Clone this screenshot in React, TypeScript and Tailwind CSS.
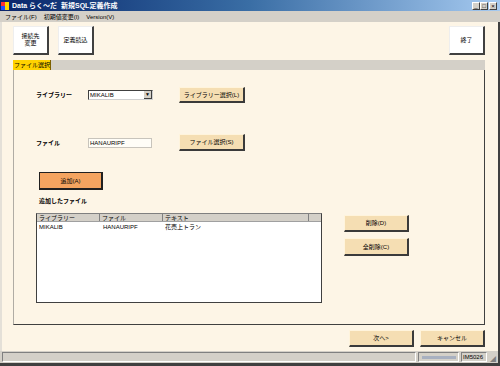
import React from "react";

const font = { fontFamily: '"Liberation Sans", "Noto Sans CJK JP", sans-serif' };

function WinBtn({ children }: { children: React.ReactNode }) {
  return (
    <div className="w-[8px] h-[8px] bg-[#d4d0c8] border-t border-l border-white border-r border-b border-r-[#404040] border-b-[#404040] flex items-center justify-center text-[6px] leading-none text-black">
      {children}
    </div>
  );
}

function WheatBtn({ label, w, h }: { label: string; w: number; h: number }) {
  return (
    <div
      className="bg-[#f5deb3] border-t border-l border-t-[#fff4dc] border-l-[#fff4dc] border-r-2 border-b-2 border-r-[#3a3a3a] border-b-[#3a3a3a] flex items-center justify-center text-[6px] leading-none text-black whitespace-nowrap"
      style={{ width: w, height: h }}
    >
      {label}
    </div>
  );
}

function ToolBtn({ label }: { label: React.ReactNode }) {
  return (
    <div className="w-[36px] h-[29px] bg-white border-t border-l border-t-[#eeeeee] border-l-[#eeeeee] border-r-2 border-b-2 border-r-[#404040] border-b-[#404040] flex items-center justify-center text-center text-[6px] leading-[7px] text-black whitespace-nowrap">
      {label}
    </div>
  );
}

export default function App() {
  return (
    <div className="w-[500px] h-[366px] flex flex-col bg-[#fdf5e6] overflow-hidden" style={font}>
      {/* Title bar */}
      <div className="h-[11px] flex items-center bg-gradient-to-r from-[#0a246a] via-[#3a6ea5] to-[#a6caf0] pl-[1px] pr-[3px]">
        <div className="w-[8px] h-[8px] mr-[3px] flex flex-wrap">
          <div className="w-[4px] h-[4px] bg-[#ff3030]" />
          <div className="w-[4px] h-[4px] bg-[#ffd800]" />
          <div className="w-[4px] h-[4px] bg-[#2050ff]" />
          <div className="w-[4px] h-[4px] bg-[#ffd800]" />
        </div>
        <div className="text-white font-bold text-[7px] leading-none whitespace-nowrap">Data らく～だ&nbsp;&nbsp;新規SQL定義作成</div>
        <div className="flex-1" />
        <div className="flex items-center">
          <WinBtn>_</WinBtn>
          <WinBtn>□</WinBtn>
          <div className="ml-[1px]"><WinBtn>×</WinBtn></div>
        </div>
      </div>
      {/* Menu bar */}
      <div className="h-[11px] bg-[#d4d0c8] flex items-center pl-[3px] gap-[7px] text-[6px] leading-none text-black border-l-2 border-l-[#d4d0c8] whitespace-nowrap">
        <span>ファイル(F)</span>
        <span>初期値変更(I)</span>
        <span>Version(V)</span>
      </div>
      {/* Content */}
      <div className="flex-1 flex flex-col border-l-2 border-l-[#e4e0d8] border-r-2 border-r-[#404040] pl-[11px] pr-[13px]">
        {/* Toolbar */}
        <div className="h-[29px] mt-[4px] flex">
          <ToolBtn label={<>接続先<br />変更</>} />
          <div className="ml-[9px]"><ToolBtn label="定義読込" /></div>
          <div className="flex-1" />
          <ToolBtn label="終了" />
        </div>
        {/* Tab strip */}
        <div className="h-[10px] mt-[5px] bg-[#d4d0c8] flex">
          <div className="w-[38px] bg-[#ffd200] border-r border-r-[#806000] text-[6px] leading-[10px] text-black pl-[1px] whitespace-nowrap">ファイル選択</div>
        </div>
        {/* Panel */}
        <div className="h-[255px] border-l border-l-[#b0aca4] border-r border-r-[#404040] border-b border-b-[#404040] pl-[22px] pt-[17px] flex flex-col">
          {/* Library row */}
          <div className="flex items-center h-[16px]">
            <div className="w-[52px] text-[6px] font-bold leading-none whitespace-nowrap">ライブラリー</div>
            <div className="w-[65px] h-[10px] bg-white border-t border-l border-t-[#404040] border-l-[#404040] border-r border-b border-r-[#d0d0d0] border-b-[#d0d0d0] flex items-center">
              <span className="flex-1 text-[6px] leading-none pl-[1px]">MIKALIB</span>
              <div className="w-[8px] h-[8px] bg-[#d4d0c8] border-r border-b border-r-[#404040] border-b-[#404040] flex items-center justify-center text-[5px] leading-none">▼</div>
            </div>
            <div className="ml-[26px]"><WheatBtn label="ライブラリー選択(L)" w={66} h={16} /></div>
          </div>
          {/* File row */}
          <div className="flex items-center h-[17px] mt-[31px]">
            <div className="w-[52px] text-[6px] font-bold leading-none whitespace-nowrap">ファイル</div>
            <div className="w-[64px] h-[10px] bg-[#fffdf7] border border-[#c8c4bc] flex items-center text-[6px] leading-none pl-[1px]">HANAURIPF</div>
            <div className="ml-[27px]"><WheatBtn label="ファイル選択(S)" w={66} h={17} /></div>
          </div>
          {/* Add button */}
          <div className="mt-[21px] ml-[3px] w-[64px] h-[18px] bg-[#f4a460] border border-[#202020] border-r-2 border-b-2 flex items-center justify-center text-[6px] leading-none">追加(A)</div>
          <div className="mt-[8px] ml-[3px] text-[6px] font-bold leading-none whitespace-nowrap">追加したファイル</div>
          <div className="flex mt-[9px]">
            {/* List */}
            <div className="w-[286px] h-[90px] bg-white border border-[#404040] border-t-[#808080] flex flex-col">
              <div className="h-[8px] bg-[#d4d0c8] flex text-[6px] leading-[8px] border-b border-b-[#a0a0a0] whitespace-nowrap">
                <div className="w-[63px] pl-[2px] border-r border-r-[#808080]">ライブラリー</div>
                <div className="w-[63px] pl-[2px] border-r border-r-[#808080]">ファイル</div>
                <div className="w-[146px] pl-[2px] border-r border-r-[#808080]">テキスト</div>
                <div className="flex-1" />
              </div>
              <div className="flex text-[6px] leading-[9px] mt-[1px] whitespace-nowrap">
                <div className="w-[63px] pl-[2px]">MIKALIB</div>
                <div className="w-[63px] pl-[3px]">HANAURIPF</div>
                <div className="w-[146px] pl-[2px]">花売上トラン</div>
              </div>
            </div>
            <div className="ml-[22px] flex flex-col gap-[6px] mt-[2px]">
              <WheatBtn label="削除(D)" w={65} h={17} />
              <WheatBtn label="全削除(C)" w={65} h={18} />
            </div>
          </div>
        </div>
        {/* Bottom buttons */}
        <div className="h-[17px] mt-[5px] flex justify-end gap-[6px]">
          <WheatBtn label="次へ>" w={65} h={17} />
          <WheatBtn label="キャンセル" w={65} h={17} />
        </div>
        <div className="flex-1" />
      </div>
      {/* Status bar */}
      <div className="h-[12px] bg-[#d4d0c8] flex items-center gap-[2px] px-[2px] border-r-2 border-r-[#404040]">
        <div className="flex-1 h-[10px] border-t border-l border-t-[#808080] border-l-[#808080] border-r border-b border-r-white border-b-white" />
        <div className="w-[41px] h-[10px] border-t border-l border-t-[#808080] border-l-[#808080] border-r border-b border-r-white border-b-white flex items-center justify-center">
          <div className="w-[34px] h-[3px] bg-[#a8b0c0]" />
        </div>
        <div className="w-[26px] h-[10px] border-t border-l border-t-[#808080] border-l-[#808080] border-r border-b border-r-white border-b-white text-[6px] leading-[8px] pl-[1px]">IM5026</div>
        <div className="w-[7px] h-[10px] flex items-end justify-end text-[6px] leading-none text-[#808080]">◢</div>
      </div>
      <div className="h-[3px] bg-[#404040]" />
    </div>
  );
}
